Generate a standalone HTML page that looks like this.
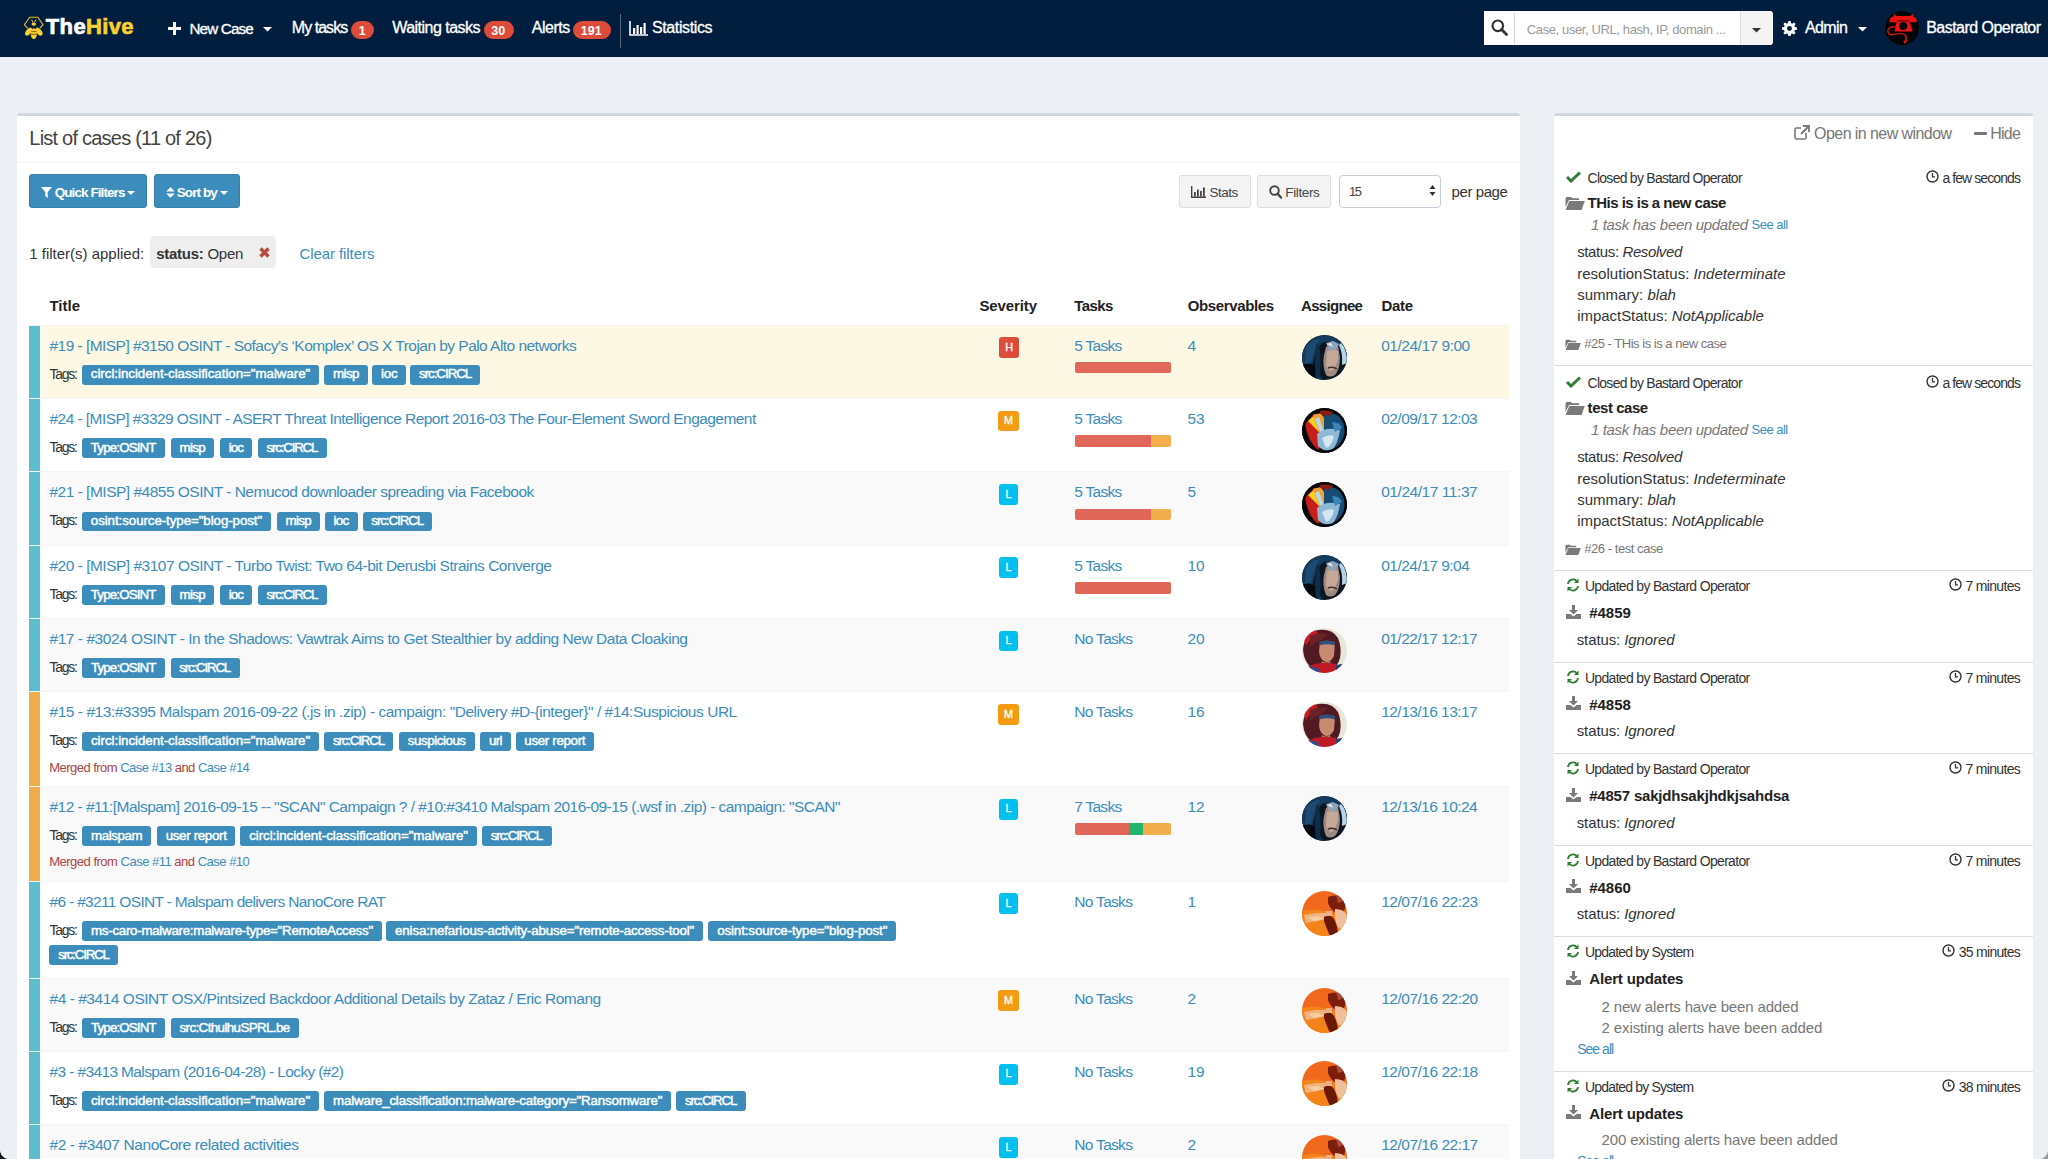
<!DOCTYPE html>
<html><head><meta charset="utf-8"><style>
html,body{margin:0;padding:0;}
body{width:2048px;height:1159px;overflow:hidden;position:relative;background:#ecf0f5;font-family:"Liberation Sans", sans-serif;}
.t{position:absolute;white-space:nowrap;line-height:1;}
svg{position:absolute;}
</style></head><body>
<div style="position:absolute;left:0px;top:0px;width:2048px;height:57px;background:#011e3e"></div>
<svg style="left:22px;top:15px" width="24" height="26" viewBox="0 0 24 26">
<path d="M5.6 13.3 L2.4 9.6 L7.7 2.2 H15.8 L21 9.6 L17.8 13.3" fill="none" stroke="#e9be2c" stroke-width="1.1"/>
<path d="M9.6 4.6 L11 7.4 M14 4.6 L12.6 7.4" stroke="#fbd02e" stroke-width="1"/>
<ellipse cx="11.8" cy="9.1" rx="2.3" ry="1.7" fill="#fbd02e"/>
<ellipse cx="6.6" cy="16.6" rx="2.5" ry="4.7" transform="rotate(38 6.6 16.6)" fill="#fbd02e"/>
<ellipse cx="17" cy="16.6" rx="2.5" ry="4.7" transform="rotate(-38 17 16.6)" fill="#fbd02e"/>
<ellipse cx="11.8" cy="18.6" rx="3.1" ry="5.4" fill="#fbd02e"/>
<path d="M9.2 16.6 H14.4 M8.9 19.3 H14.7" stroke="#7a6320" stroke-width="1"/>
</svg>
<div style="position:absolute;left:168px;top:26.5px;width:13px;height:3.2px;background:#fff"></div>
<div style="position:absolute;left:172.9px;top:21.6px;width:3.2px;height:13px;background:#fff"></div>
<svg style="left:263px;top:27px" width="9" height="5"><path d="M0 0 H9 L4.5 4.5Z" fill="#fff"/></svg>
<div style="position:absolute;left:351.3px;top:20.5px;width:22.599999999999966px;height:18.5px;background:#dd4b39;border-radius:9px"></div>
<div style="position:absolute;left:483.7px;top:20.5px;width:30.099999999999966px;height:18.5px;background:#dd4b39;border-radius:9px"></div>
<div style="position:absolute;left:573.3px;top:20.5px;width:37.60000000000002px;height:18.5px;background:#dd4b39;border-radius:9px"></div>
<div style="position:absolute;left:620px;top:14px;width:1px;height:34px;background:#5b6b7d"></div>
<svg style="left:629px;top:21px" width="20" height="15" viewBox="0 0 20 15">
<path d="M1 0 V14 H19" fill="none" stroke="#fff" stroke-width="1.6"/>
<rect x="4" y="7" width="2.2" height="6" fill="#fff"/><rect x="7.5" y="4" width="2.2" height="9" fill="#fff"/>
<rect x="11" y="6" width="2.2" height="7" fill="#fff"/><rect x="14.5" y="2" width="2.2" height="11" fill="#fff"/>
</svg>
<div style="position:absolute;left:1483.5px;top:11.4px;width:289px;height:34px;background:#fff;border-radius:0 3px 3px 0"></div>
<div style="position:absolute;left:1514px;top:13px;width:1px;height:31px;background:#d2d6de"></div>
<div style="position:absolute;left:1740.3px;top:11.4px;width:32px;height:34px;background:#f4f4f4;border-radius:0 3px 3px 0;border-left:1px solid #e0e0e0;box-sizing:border-box"></div>
<svg style="left:1491px;top:19px" width="17" height="17" viewBox="0 0 17 17">
<circle cx="6.8" cy="6.8" r="5.3" fill="none" stroke="#333" stroke-width="2.2"/>
<path d="M10.6 10.6 L15.5 15.5" stroke="#333" stroke-width="2.8" stroke-linecap="round"/></svg>
<svg style="left:1752px;top:28px" width="9" height="5"><path d="M0 0 H9 L4.5 4.5Z" fill="#333"/></svg>
<svg style="left:1782px;top:21px" width="15" height="15" viewBox="0 0 16 16">
<path fill="#fff" d="M6.8 0h2.4l.4 2.2 1.3.6 1.9-1.3 1.7 1.7-1.3 1.9.6 1.3 2.2.4v2.4l-2.2.4-.6 1.3 1.3 1.9-1.7 1.7-1.9-1.3-1.3.6-.4 2.2H6.8l-.4-2.2-1.3-.6-1.9 1.3-1.7-1.7 1.3-1.9-.6-1.3L0 9.2V6.8l2.2-.4.6-1.3-1.3-1.9 1.7-1.7 1.9 1.3 1.3-.6z"/>
<circle cx="8" cy="8" r="2.6" fill="#011e3e"/></svg>
<svg style="left:1858px;top:27px" width="9" height="5"><path d="M0 0 H9 L4.5 4.5Z" fill="#fff"/></svg>
<svg style="left:1885px;top:11px" width="34" height="34" viewBox="0 0 34 34">
<circle cx="17.1" cy="17.2" r="16.9" fill="#050505"/>
<path d="M4.5 9.5 Q5 6 9 5.3 L8.6 2 L11 4.9 H25.6 L28.2 2.4 L27.8 5.4 Q31.5 6 31.8 10 L31.8 11.3 L25 11.3 L24.2 9.4 H12.4 L11.6 11.3 H4.5Z" fill="#ee1111"/>
<path d="M11.7 10.2 H24.6 L27.7 20.4 H9.4Z" fill="#ee1111"/>
<circle cx="18.2" cy="15.1" r="4" fill="#050505"/>
<path d="M9.8 15.5 Q3 16 2.8 20 Q3 24 8 23.6 Q18 21.5 20.5 24 Q22 27 20.5 31" fill="none" stroke="#c81a12" stroke-width="1.5"/>
<path d="M18.3 29.8 L22.6 29.6 L19.4 33Z" fill="#ee1111"/>
</svg>
<div style="position:absolute;left:17px;top:113px;width:1503px;height:1100px;background:#fff;border-top:3px solid #d2d6de;border-radius:3px;box-shadow:0 1px 1px rgba(0,0,0,.1);box-sizing:border-box"></div>
<div style="position:absolute;left:17px;top:162px;width:1503px;height:1px;background:#f4f4f4"></div>
<div style="position:absolute;left:29px;top:174px;width:118.4px;height:34px;background:#3c8dbc;border:1px solid #367fa9;border-radius:3px;box-sizing:border-box"></div>
<svg style="left:41px;top:187px" width="11" height="11" viewBox="0 0 11 11"><path d="M0 0 H11 L6.8 5 V11 L4.2 9 V5Z" fill="#fff"/></svg>
<svg style="left:127px;top:191px" width="8" height="4"><path d="M0 0 H8 L4 4Z" fill="#fff"/></svg>
<div style="position:absolute;left:154.4px;top:174px;width:85.3px;height:34px;background:#3c8dbc;border:1px solid #367fa9;border-radius:3px;box-sizing:border-box"></div>
<svg style="left:165.5px;top:186.5px" width="9" height="11" viewBox="0 0 9 11"><path d="M0.3 4.6 L4.5 0 L8.7 4.6Z M0.3 6.4 L4.5 11 L8.7 6.4Z" fill="#fff"/></svg>
<svg style="left:219.5px;top:191px" width="8" height="4"><path d="M0 0 H8 L4 4Z" fill="#fff"/></svg>
<div style="position:absolute;left:1178.6px;top:174.6px;width:72px;height:33px;background:#f4f4f4;border:1px solid #ddd;border-radius:3px;box-sizing:border-box"></div>
<svg style="left:1191px;top:186px" width="15" height="12" viewBox="0 0 15 12">
<path d="M0.7 0 V11.3 H15" fill="none" stroke="#444" stroke-width="1.4"/>
<rect x="3" y="6" width="1.8" height="4.6" fill="#444"/><rect x="6" y="3.5" width="1.8" height="7.1" fill="#444"/>
<rect x="9" y="5" width="1.8" height="5.6" fill="#444"/><rect x="12" y="1.5" width="1.8" height="9.1" fill="#444"/></svg>
<div style="position:absolute;left:1256.8px;top:174.6px;width:74.6px;height:33px;background:#f4f4f4;border:1px solid #ddd;border-radius:3px;box-sizing:border-box"></div>
<svg style="left:1269px;top:185px" width="13" height="14" viewBox="0 0 13 14">
<circle cx="5.5" cy="5.5" r="4.3" fill="none" stroke="#444" stroke-width="1.9"/>
<path d="M8.6 8.8 L12 12.5" stroke="#444" stroke-width="2.4" stroke-linecap="round"/></svg>
<div style="position:absolute;left:1339.2px;top:174.6px;width:102.2px;height:33px;background:#fff;border:1px solid #c8cdd8;border-radius:4px;box-sizing:border-box"></div>
<svg style="left:1429px;top:184px" width="7" height="13" viewBox="0 0 7 13"><path d="M0.5 5 L3.5 1 L6.5 5Z M0.5 8 L3.5 12 L6.5 8Z" fill="#333"/></svg>
<div style="position:absolute;left:150.3px;top:236.2px;width:125.7px;height:32.3px;background:#eeeeee;border-radius:4px"></div>
<svg style="left:259px;top:247px" width="11" height="11" viewBox="0 0 11 11"><path d="M1.5 1.5 L9.5 9.5 M9.5 1.5 L1.5 9.5" stroke="#b94a3c" stroke-width="3.4"/></svg>
<div style="position:absolute;left:29px;top:324.5px;width:1480px;height:1px;background:#f4f4f4"></div>
<div style="position:absolute;left:41px;top:325.5px;width:1468px;height:72.4px;background:#fcf8e3"></div>
<div style="position:absolute;left:29px;top:325.5px;width:11px;height:72.4px;background:#5cbecd"></div>
<div style="position:absolute;left:82px;top:364.9px;width:237.10000000000002px;height:19.8px;background:#3c8dbc;border-radius:3px"></div>
<div style="position:absolute;left:324.2px;top:364.9px;width:43.80000000000001px;height:19.8px;background:#3c8dbc;border-radius:3px"></div>
<div style="position:absolute;left:372.3px;top:364.9px;width:34.0px;height:19.8px;background:#3c8dbc;border-radius:3px"></div>
<div style="position:absolute;left:410.2px;top:364.9px;width:70.30000000000001px;height:19.8px;background:#3c8dbc;border-radius:3px"></div>
<div style="position:absolute;left:998.7px;top:337.3px;width:20.3px;height:20.8px;background:#dd4b39;border-radius:3px"></div>
<div style="position:absolute;left:1074.7px;top:361.9px;width:96px;height:11.5px;background:#e0675a;border-radius:2px"></div>
<svg style="left:1302px;top:334.8px" width="45" height="45" viewBox="0 0 45 45"><defs><clipPath id="c1302_3348"><circle cx="22.5" cy="22.5" r="22.5"/></clipPath></defs><g clip-path="url(#c1302_3348)"><rect width="45" height="45" fill="#0b1622"/>
<path d="M0 18 Q6 2 22 0 Q36 0 45 12 L45 30 Q40 20 36 10 Q28 4 20 8 Q12 16 10 34 L0 40Z" fill="#143a5c"/>
<path d="M4 12 Q10 4 18 4 Q12 14 9 28 L3 30Z" fill="#1d4a70"/>
<path d="M39 8 Q45 14 45 28 L40 30 Q41 18 37 10Z" fill="#b9d3e6"/>
<path d="M24 12 Q30 8 36 11 L38 22 Q38 34 33 40 Q28 43 24 40 Q20 30 22 20Z" fill="#a08a80"/>
<path d="M25 16 Q31 14 36 16 L36 24 Q34 32 30 36 Q26 36 24 30Z" fill="#c6a898"/>
<path d="M24 8 L31 6 L37 9 L33 16 L27 15Z" fill="#8fa3b5"/>
<path d="M25 9 L29 8 L31 12Z" fill="#e6eef5"/>
<path d="M26 33 Q31 31 35 34" stroke="#3a2a2a" stroke-width="1.4" fill="none"/>
<path d="M0 30 Q8 26 14 32 Q18 40 14 45 L0 45Z" fill="#05090f"/>
<path d="M16 8 Q20 20 18 40 L22 45 L14 45 Q12 30 14 10Z" fill="#0f2e4a"/></g></svg>
<div style="position:absolute;left:29px;top:397.9px;width:1480px;height:1px;background:#f4f4f4"></div>
<div style="position:absolute;left:41px;top:398.9px;width:1468px;height:72.3px;background:#ffffff"></div>
<div style="position:absolute;left:29px;top:398.9px;width:11px;height:72.3px;background:#5cbecd"></div>
<div style="position:absolute;left:82px;top:438.29999999999995px;width:82.80000000000001px;height:19.8px;background:#3c8dbc;border-radius:3px"></div>
<div style="position:absolute;left:170.7px;top:438.29999999999995px;width:43.30000000000001px;height:19.8px;background:#3c8dbc;border-radius:3px"></div>
<div style="position:absolute;left:219.9px;top:438.29999999999995px;width:32.400000000000006px;height:19.8px;background:#3c8dbc;border-radius:3px"></div>
<div style="position:absolute;left:257.8px;top:438.29999999999995px;width:68.80000000000001px;height:19.8px;background:#3c8dbc;border-radius:3px"></div>
<div style="position:absolute;left:997.5px;top:410.7px;width:21.2px;height:20.8px;background:#f39c12;border-radius:3px"></div>
<div style="position:absolute;left:1074.7px;top:435.29999999999995px;width:76px;height:11.5px;background:#e0675a;border-radius:2px 0 0 2px"></div>
<div style="position:absolute;left:1150.7px;top:435.29999999999995px;width:20px;height:11.5px;background:#f2ae4a;border-radius:0 2px 2px 0"></div>
<svg style="left:1302px;top:408.2px" width="45" height="45" viewBox="0 0 45 45"><defs><clipPath id="c1302_4082"><circle cx="22.5" cy="22.5" r="22.5"/></clipPath></defs><g clip-path="url(#c1302_4082)"><rect width="45" height="45" fill="#0a0a0c"/>
<path d="M3 16 L12 6 L22 8 L24 34 L16 42 Q6 34 3 16Z" fill="#c81e1a"/>
<path d="M6 13 L14 6 L21 10 L22 26 L17 24Z" fill="#f5cf22"/>
<path d="M11 7 L19 5 L24 14 L24 30 L18 26 Q14 16 11 7Z" fill="#f0a032"/>
<path d="M13 11 L17 9 L23 27 L20 29Z" fill="#b6d8ec"/>
<path d="M22 4 Q36 4 42 14 Q45 26 40 38 Q32 45 24 44 L22 30Z" fill="#174b72"/>
<path d="M15 26 Q24 18 38 22 Q36 36 30 42 Q22 44 16 38Z" fill="#8fb8d4"/>
<path d="M20 30 Q26 26 32 28 Q30 38 24 40Z" fill="#d4e6f2"/>
<path d="M30 14 Q38 14 40 20 L33 24Z" fill="#3a86b8"/>
<path d="M18 1 Q26 0 32 4 L26 8 L18 6Z" fill="#8c1b14"/>
<circle cx="22.5" cy="22.5" r="21.5" fill="none" stroke="#08080a" stroke-width="3"/></g></svg>
<div style="position:absolute;left:29px;top:471.2px;width:1480px;height:1px;background:#f4f4f4"></div>
<div style="position:absolute;left:41px;top:472.2px;width:1468px;height:72.4px;background:#f9f9f9"></div>
<div style="position:absolute;left:29px;top:472.2px;width:11px;height:72.4px;background:#5cbecd"></div>
<div style="position:absolute;left:82px;top:511.59999999999997px;width:189px;height:19.8px;background:#3c8dbc;border-radius:3px"></div>
<div style="position:absolute;left:276.6px;top:511.59999999999997px;width:43.69999999999999px;height:19.8px;background:#3c8dbc;border-radius:3px"></div>
<div style="position:absolute;left:324.6px;top:511.59999999999997px;width:33.19999999999999px;height:19.8px;background:#3c8dbc;border-radius:3px"></div>
<div style="position:absolute;left:362.5px;top:511.59999999999997px;width:69.89999999999998px;height:19.8px;background:#3c8dbc;border-radius:3px"></div>
<div style="position:absolute;left:998.6px;top:484.0px;width:19.2px;height:20.8px;background:#00c0ef;border-radius:3px"></div>
<div style="position:absolute;left:1074.7px;top:508.59999999999997px;width:76px;height:11.5px;background:#e0675a;border-radius:2px 0 0 2px"></div>
<div style="position:absolute;left:1150.7px;top:508.59999999999997px;width:20px;height:11.5px;background:#f2ae4a;border-radius:0 2px 2px 0"></div>
<svg style="left:1302px;top:481.5px" width="45" height="45" viewBox="0 0 45 45"><defs><clipPath id="c1302_4815"><circle cx="22.5" cy="22.5" r="22.5"/></clipPath></defs><g clip-path="url(#c1302_4815)"><rect width="45" height="45" fill="#0a0a0c"/>
<path d="M3 16 L12 6 L22 8 L24 34 L16 42 Q6 34 3 16Z" fill="#c81e1a"/>
<path d="M6 13 L14 6 L21 10 L22 26 L17 24Z" fill="#f5cf22"/>
<path d="M11 7 L19 5 L24 14 L24 30 L18 26 Q14 16 11 7Z" fill="#f0a032"/>
<path d="M13 11 L17 9 L23 27 L20 29Z" fill="#b6d8ec"/>
<path d="M22 4 Q36 4 42 14 Q45 26 40 38 Q32 45 24 44 L22 30Z" fill="#174b72"/>
<path d="M15 26 Q24 18 38 22 Q36 36 30 42 Q22 44 16 38Z" fill="#8fb8d4"/>
<path d="M20 30 Q26 26 32 28 Q30 38 24 40Z" fill="#d4e6f2"/>
<path d="M30 14 Q38 14 40 20 L33 24Z" fill="#3a86b8"/>
<path d="M18 1 Q26 0 32 4 L26 8 L18 6Z" fill="#8c1b14"/>
<circle cx="22.5" cy="22.5" r="21.5" fill="none" stroke="#08080a" stroke-width="3"/></g></svg>
<div style="position:absolute;left:29px;top:544.6px;width:1480px;height:1px;background:#f4f4f4"></div>
<div style="position:absolute;left:41px;top:545.6px;width:1468px;height:72.3px;background:#ffffff"></div>
<div style="position:absolute;left:29px;top:545.6px;width:11px;height:72.3px;background:#5cbecd"></div>
<div style="position:absolute;left:82px;top:585.0px;width:82.80000000000001px;height:19.8px;background:#3c8dbc;border-radius:3px"></div>
<div style="position:absolute;left:170.7px;top:585.0px;width:43.30000000000001px;height:19.8px;background:#3c8dbc;border-radius:3px"></div>
<div style="position:absolute;left:219.9px;top:585.0px;width:32.400000000000006px;height:19.8px;background:#3c8dbc;border-radius:3px"></div>
<div style="position:absolute;left:257.8px;top:585.0px;width:68.80000000000001px;height:19.8px;background:#3c8dbc;border-radius:3px"></div>
<div style="position:absolute;left:998.6px;top:557.4px;width:19.2px;height:20.8px;background:#00c0ef;border-radius:3px"></div>
<div style="position:absolute;left:1074.7px;top:582.0px;width:96px;height:11.5px;background:#e0675a;border-radius:2px"></div>
<svg style="left:1302px;top:554.9px" width="45" height="45" viewBox="0 0 45 45"><defs><clipPath id="c1302_5549"><circle cx="22.5" cy="22.5" r="22.5"/></clipPath></defs><g clip-path="url(#c1302_5549)"><rect width="45" height="45" fill="#0b1622"/>
<path d="M0 18 Q6 2 22 0 Q36 0 45 12 L45 30 Q40 20 36 10 Q28 4 20 8 Q12 16 10 34 L0 40Z" fill="#143a5c"/>
<path d="M4 12 Q10 4 18 4 Q12 14 9 28 L3 30Z" fill="#1d4a70"/>
<path d="M39 8 Q45 14 45 28 L40 30 Q41 18 37 10Z" fill="#b9d3e6"/>
<path d="M24 12 Q30 8 36 11 L38 22 Q38 34 33 40 Q28 43 24 40 Q20 30 22 20Z" fill="#a08a80"/>
<path d="M25 16 Q31 14 36 16 L36 24 Q34 32 30 36 Q26 36 24 30Z" fill="#c6a898"/>
<path d="M24 8 L31 6 L37 9 L33 16 L27 15Z" fill="#8fa3b5"/>
<path d="M25 9 L29 8 L31 12Z" fill="#e6eef5"/>
<path d="M26 33 Q31 31 35 34" stroke="#3a2a2a" stroke-width="1.4" fill="none"/>
<path d="M0 30 Q8 26 14 32 Q18 40 14 45 L0 45Z" fill="#05090f"/>
<path d="M16 8 Q20 20 18 40 L22 45 L14 45 Q12 30 14 10Z" fill="#0f2e4a"/></g></svg>
<div style="position:absolute;left:29px;top:617.9px;width:1480px;height:1px;background:#f4f4f4"></div>
<div style="position:absolute;left:41px;top:618.9px;width:1468px;height:72.4px;background:#f9f9f9"></div>
<div style="position:absolute;left:29px;top:618.9px;width:11px;height:72.4px;background:#5cbecd"></div>
<div style="position:absolute;left:82.2px;top:658.3px;width:82.60000000000001px;height:19.8px;background:#3c8dbc;border-radius:3px"></div>
<div style="position:absolute;left:170.5px;top:658.3px;width:69.0px;height:19.8px;background:#3c8dbc;border-radius:3px"></div>
<div style="position:absolute;left:998.6px;top:630.6999999999999px;width:19.2px;height:20.8px;background:#00c0ef;border-radius:3px"></div>
<svg style="left:1302px;top:628.1999999999999px" width="45" height="45" viewBox="0 0 45 45"><defs><clipPath id="c1302_6281"><circle cx="22.5" cy="22.5" r="22.5"/></clipPath></defs><g clip-path="url(#c1302_6281)"><rect width="45" height="45" fill="#e8e6d8"/>
<path d="M1 22 Q2 6 16 2 Q30 0 36 10 Q40 20 38 30 Q36 38 30 40 L10 40 Q2 34 1 22Z" fill="#4f1a22"/>
<path d="M2 12 Q6 4 14 2 L16 6 Q8 10 4 18Z" fill="#c41c22"/>
<path d="M8 8 Q16 4 26 6 L20 12 Q12 14 8 20Z" fill="#6a2228"/>
<path d="M18 14 Q26 11 33 15 L32 28 Q29 34 24 34 Q18 32 17 24Z" fill="#c98a72"/>
<path d="M17 14 Q25 11 33 14 L33 17.5 Q25 15 17 17.5Z" fill="#2f507c"/>
<path d="M20 33 Q24 36 28 33 L29 37 L19 37Z" fill="#c07a62"/>
<path d="M18 35 L30 35 L30 38 L18 38Z" fill="#37568a"/>
<path d="M7 38 Q18 33 34 36 L36 45 L8 45Z" fill="#c21a22"/>
<path d="M5 38 L16 40 L18 45 L6 45Z" fill="#2f4f8c"/>
<path d="M34 37 L45 35 L45 45 L34 45Z" fill="#2a3f74"/></g></svg>
<div style="position:absolute;left:29px;top:691.3px;width:1480px;height:1px;background:#f4f4f4"></div>
<div style="position:absolute;left:41px;top:692.3px;width:1468px;height:93.65px;background:#ffffff"></div>
<div style="position:absolute;left:29px;top:692.3px;width:11px;height:93.65px;background:#f0ad4e"></div>
<div style="position:absolute;left:82.2px;top:731.6999999999999px;width:236.8px;height:19.8px;background:#3c8dbc;border-radius:3px"></div>
<div style="position:absolute;left:324.3px;top:731.6999999999999px;width:69.0px;height:19.8px;background:#3c8dbc;border-radius:3px"></div>
<div style="position:absolute;left:399px;top:731.6999999999999px;width:75.60000000000002px;height:19.8px;background:#3c8dbc;border-radius:3px"></div>
<div style="position:absolute;left:480.3px;top:731.6999999999999px;width:30.69999999999999px;height:19.8px;background:#3c8dbc;border-radius:3px"></div>
<div style="position:absolute;left:515.5px;top:731.6999999999999px;width:78.60000000000002px;height:19.8px;background:#3c8dbc;border-radius:3px"></div>
<div style="position:absolute;left:997.5px;top:704.0999999999999px;width:21.2px;height:20.8px;background:#f39c12;border-radius:3px"></div>
<svg style="left:1302px;top:701.5999999999999px" width="45" height="45" viewBox="0 0 45 45"><defs><clipPath id="c1302_7015"><circle cx="22.5" cy="22.5" r="22.5"/></clipPath></defs><g clip-path="url(#c1302_7015)"><rect width="45" height="45" fill="#e8e6d8"/>
<path d="M1 22 Q2 6 16 2 Q30 0 36 10 Q40 20 38 30 Q36 38 30 40 L10 40 Q2 34 1 22Z" fill="#4f1a22"/>
<path d="M2 12 Q6 4 14 2 L16 6 Q8 10 4 18Z" fill="#c41c22"/>
<path d="M8 8 Q16 4 26 6 L20 12 Q12 14 8 20Z" fill="#6a2228"/>
<path d="M18 14 Q26 11 33 15 L32 28 Q29 34 24 34 Q18 32 17 24Z" fill="#c98a72"/>
<path d="M17 14 Q25 11 33 14 L33 17.5 Q25 15 17 17.5Z" fill="#2f507c"/>
<path d="M20 33 Q24 36 28 33 L29 37 L19 37Z" fill="#c07a62"/>
<path d="M18 35 L30 35 L30 38 L18 38Z" fill="#37568a"/>
<path d="M7 38 Q18 33 34 36 L36 45 L8 45Z" fill="#c21a22"/>
<path d="M5 38 L16 40 L18 45 L6 45Z" fill="#2f4f8c"/>
<path d="M34 37 L45 35 L45 45 L34 45Z" fill="#2a3f74"/></g></svg>
<div style="position:absolute;left:29px;top:785.95px;width:1480px;height:1px;background:#f4f4f4"></div>
<div style="position:absolute;left:41px;top:786.95px;width:1468px;height:93.65px;background:#f9f9f9"></div>
<div style="position:absolute;left:29px;top:786.95px;width:11px;height:93.65px;background:#f0ad4e"></div>
<div style="position:absolute;left:82.2px;top:826.35px;width:68.99999999999999px;height:19.8px;background:#3c8dbc;border-radius:3px"></div>
<div style="position:absolute;left:156.9px;top:826.35px;width:78.6px;height:19.8px;background:#3c8dbc;border-radius:3px"></div>
<div style="position:absolute;left:240.4px;top:826.35px;width:236.4px;height:19.8px;background:#3c8dbc;border-radius:3px"></div>
<div style="position:absolute;left:482px;top:826.35px;width:69.5px;height:19.8px;background:#3c8dbc;border-radius:3px"></div>
<div style="position:absolute;left:998.6px;top:798.75px;width:19.2px;height:20.8px;background:#00c0ef;border-radius:3px"></div>
<div style="position:absolute;left:1074.7px;top:823.35px;width:54px;height:11.5px;background:#e0675a;border-radius:2px 0 0 2px"></div>
<div style="position:absolute;left:1128.7px;top:823.35px;width:14px;height:11.5px;background:#25b46e;"></div>
<div style="position:absolute;left:1142.7px;top:823.35px;width:28px;height:11.5px;background:#f2ae4a;border-radius:0 2px 2px 0"></div>
<svg style="left:1302px;top:796.25px" width="45" height="45" viewBox="0 0 45 45"><defs><clipPath id="c1302_7962"><circle cx="22.5" cy="22.5" r="22.5"/></clipPath></defs><g clip-path="url(#c1302_7962)"><rect width="45" height="45" fill="#0b1622"/>
<path d="M0 18 Q6 2 22 0 Q36 0 45 12 L45 30 Q40 20 36 10 Q28 4 20 8 Q12 16 10 34 L0 40Z" fill="#143a5c"/>
<path d="M4 12 Q10 4 18 4 Q12 14 9 28 L3 30Z" fill="#1d4a70"/>
<path d="M39 8 Q45 14 45 28 L40 30 Q41 18 37 10Z" fill="#b9d3e6"/>
<path d="M24 12 Q30 8 36 11 L38 22 Q38 34 33 40 Q28 43 24 40 Q20 30 22 20Z" fill="#a08a80"/>
<path d="M25 16 Q31 14 36 16 L36 24 Q34 32 30 36 Q26 36 24 30Z" fill="#c6a898"/>
<path d="M24 8 L31 6 L37 9 L33 16 L27 15Z" fill="#8fa3b5"/>
<path d="M25 9 L29 8 L31 12Z" fill="#e6eef5"/>
<path d="M26 33 Q31 31 35 34" stroke="#3a2a2a" stroke-width="1.4" fill="none"/>
<path d="M0 30 Q8 26 14 32 Q18 40 14 45 L0 45Z" fill="#05090f"/>
<path d="M16 8 Q20 20 18 40 L22 45 L14 45 Q12 30 14 10Z" fill="#0f2e4a"/></g></svg>
<div style="position:absolute;left:29px;top:880.6px;width:1480px;height:1px;background:#f4f4f4"></div>
<div style="position:absolute;left:41px;top:881.6px;width:1468px;height:96.0px;background:#ffffff"></div>
<div style="position:absolute;left:29px;top:881.6px;width:11px;height:96.0px;background:#5cbecd"></div>
<div style="position:absolute;left:82.2px;top:921.0px;width:299.6px;height:19.8px;background:#3c8dbc;border-radius:3px"></div>
<div style="position:absolute;left:386.3px;top:921.0px;width:316.7px;height:19.8px;background:#3c8dbc;border-radius:3px"></div>
<div style="position:absolute;left:708.4px;top:921.0px;width:187.80000000000007px;height:19.8px;background:#3c8dbc;border-radius:3px"></div>
<div style="position:absolute;left:49.4px;top:945.1px;width:68.69999999999999px;height:19.8px;background:#3c8dbc;border-radius:3px"></div>
<div style="position:absolute;left:998.6px;top:893.4px;width:19.2px;height:20.8px;background:#00c0ef;border-radius:3px"></div>
<svg style="left:1302px;top:890.9px" width="45" height="45" viewBox="0 0 45 45"><defs><clipPath id="c1302_8909"><circle cx="22.5" cy="22.5" r="22.5"/></clipPath></defs><g clip-path="url(#c1302_8909)"><rect width="45" height="45" fill="#f0691c"/>
<path d="M0 20 Q14 16 30 22 L45 30 L45 45 L0 45Z" fill="#f2841a"/>
<path d="M2 24 L14 22 L24 22 L26 27 L16 30 L4 32Z" fill="#f1b282"/>
<path d="M6 26 L16 25 L22 28 L12 30Z" fill="#f6d0a0"/>
<path d="M26 6 Q34 2 42 8 Q45 16 41 22 L34 22 Q28 18 26 12Z" fill="#7c1e0c"/>
<path d="M34 4 Q40 6 42 10 L36 12Z" fill="#b04a3a"/>
<path d="M22 26 Q28 22 32 28 Q36 36 36 44 L28 45 Q24 36 22 30Z" fill="#6a1808"/>
<path d="M33 18 Q42 18 45 24 L45 36 Q40 40 36 36 Q32 28 33 18Z" fill="#f0c09a"/>
<path d="M24 20 L30 20 L30 25 L24 25Z" fill="#e9b08a"/></g></svg>
<div style="position:absolute;left:29px;top:977.6px;width:1480px;height:1px;background:#f4f4f4"></div>
<div style="position:absolute;left:41px;top:978.6px;width:1468px;height:72.4px;background:#f9f9f9"></div>
<div style="position:absolute;left:29px;top:978.6px;width:11px;height:72.4px;background:#5cbecd"></div>
<div style="position:absolute;left:82.2px;top:1018.0px;width:82.7px;height:19.8px;background:#3c8dbc;border-radius:3px"></div>
<div style="position:absolute;left:170.7px;top:1018.0px;width:128.0px;height:19.8px;background:#3c8dbc;border-radius:3px"></div>
<div style="position:absolute;left:997.5px;top:990.4px;width:21.2px;height:20.8px;background:#f39c12;border-radius:3px"></div>
<svg style="left:1302px;top:987.9px" width="45" height="45" viewBox="0 0 45 45"><defs><clipPath id="c1302_9879"><circle cx="22.5" cy="22.5" r="22.5"/></clipPath></defs><g clip-path="url(#c1302_9879)"><rect width="45" height="45" fill="#f0691c"/>
<path d="M0 20 Q14 16 30 22 L45 30 L45 45 L0 45Z" fill="#f2841a"/>
<path d="M2 24 L14 22 L24 22 L26 27 L16 30 L4 32Z" fill="#f1b282"/>
<path d="M6 26 L16 25 L22 28 L12 30Z" fill="#f6d0a0"/>
<path d="M26 6 Q34 2 42 8 Q45 16 41 22 L34 22 Q28 18 26 12Z" fill="#7c1e0c"/>
<path d="M34 4 Q40 6 42 10 L36 12Z" fill="#b04a3a"/>
<path d="M22 26 Q28 22 32 28 Q36 36 36 44 L28 45 Q24 36 22 30Z" fill="#6a1808"/>
<path d="M33 18 Q42 18 45 24 L45 36 Q40 40 36 36 Q32 28 33 18Z" fill="#f0c09a"/>
<path d="M24 20 L30 20 L30 25 L24 25Z" fill="#e9b08a"/></g></svg>
<div style="position:absolute;left:29px;top:1051.0px;width:1480px;height:1px;background:#f4f4f4"></div>
<div style="position:absolute;left:41px;top:1052.0px;width:1468px;height:72.4px;background:#ffffff"></div>
<div style="position:absolute;left:29px;top:1052.0px;width:11px;height:72.4px;background:#5cbecd"></div>
<div style="position:absolute;left:82.2px;top:1091.4px;width:236.8px;height:19.8px;background:#3c8dbc;border-radius:3px"></div>
<div style="position:absolute;left:324.3px;top:1091.4px;width:346.90000000000003px;height:19.8px;background:#3c8dbc;border-radius:3px"></div>
<div style="position:absolute;left:676.1px;top:1091.4px;width:69.60000000000002px;height:19.8px;background:#3c8dbc;border-radius:3px"></div>
<div style="position:absolute;left:998.6px;top:1063.8px;width:19.2px;height:20.8px;background:#00c0ef;border-radius:3px"></div>
<svg style="left:1302px;top:1061.3px" width="45" height="45" viewBox="0 0 45 45"><defs><clipPath id="c1302_10613"><circle cx="22.5" cy="22.5" r="22.5"/></clipPath></defs><g clip-path="url(#c1302_10613)"><rect width="45" height="45" fill="#f0691c"/>
<path d="M0 20 Q14 16 30 22 L45 30 L45 45 L0 45Z" fill="#f2841a"/>
<path d="M2 24 L14 22 L24 22 L26 27 L16 30 L4 32Z" fill="#f1b282"/>
<path d="M6 26 L16 25 L22 28 L12 30Z" fill="#f6d0a0"/>
<path d="M26 6 Q34 2 42 8 Q45 16 41 22 L34 22 Q28 18 26 12Z" fill="#7c1e0c"/>
<path d="M34 4 Q40 6 42 10 L36 12Z" fill="#b04a3a"/>
<path d="M22 26 Q28 22 32 28 Q36 36 36 44 L28 45 Q24 36 22 30Z" fill="#6a1808"/>
<path d="M33 18 Q42 18 45 24 L45 36 Q40 40 36 36 Q32 28 33 18Z" fill="#f0c09a"/>
<path d="M24 20 L30 20 L30 25 L24 25Z" fill="#e9b08a"/></g></svg>
<div style="position:absolute;left:29px;top:1124.4px;width:1480px;height:1px;background:#f4f4f4"></div>
<div style="position:absolute;left:41px;top:1125.4px;width:1468px;height:72.4px;background:#f9f9f9"></div>
<div style="position:absolute;left:29px;top:1125.4px;width:11px;height:72.4px;background:#5cbecd"></div>
<div style="position:absolute;left:998.6px;top:1137.2px;width:19.2px;height:20.8px;background:#00c0ef;border-radius:3px"></div>
<svg style="left:1302px;top:1134.7px" width="45" height="45" viewBox="0 0 45 45"><defs><clipPath id="c1302_11347"><circle cx="22.5" cy="22.5" r="22.5"/></clipPath></defs><g clip-path="url(#c1302_11347)"><rect width="45" height="45" fill="#f0691c"/>
<path d="M0 20 Q14 16 30 22 L45 30 L45 45 L0 45Z" fill="#f2841a"/>
<path d="M2 24 L14 22 L24 22 L26 27 L16 30 L4 32Z" fill="#f1b282"/>
<path d="M6 26 L16 25 L22 28 L12 30Z" fill="#f6d0a0"/>
<path d="M26 6 Q34 2 42 8 Q45 16 41 22 L34 22 Q28 18 26 12Z" fill="#7c1e0c"/>
<path d="M34 4 Q40 6 42 10 L36 12Z" fill="#b04a3a"/>
<path d="M22 26 Q28 22 32 28 Q36 36 36 44 L28 45 Q24 36 22 30Z" fill="#6a1808"/>
<path d="M33 18 Q42 18 45 24 L45 36 Q40 40 36 36 Q32 28 33 18Z" fill="#f0c09a"/>
<path d="M24 20 L30 20 L30 25 L24 25Z" fill="#e9b08a"/></g></svg>
<div style="position:absolute;left:1554px;top:113px;width:479px;height:1100px;background:#fff;border-top:3px solid #d2d6de;border-radius:3px;box-sizing:border-box;box-shadow:0 1px 1px rgba(0,0,0,.1)"></div>
<svg style="left:1794px;top:125px" width="16" height="15" viewBox="0 0 16 15">
<path d="M7 3 H2.5 Q1 3 1 4.5 V12.5 Q1 14 2.5 14 H10.5 Q12 14 12 12.5 V8" fill="none" stroke="#777" stroke-width="1.6"/>
<path d="M9 1 H15 V7 M15 1 L7 9" fill="none" stroke="#777" stroke-width="1.8"/></svg>
<div style="position:absolute;left:1974px;top:131.5px;width:13px;height:3px;background:#777;border-radius:1px"></div>
<svg style="left:1565.5px;top:171px" width="15" height="12" viewBox="0 0 15 12"><path d="M1 6 L5 10 L14 1.5" fill="none" stroke="#2e7d32" stroke-width="3"/></svg>
<svg style="left:1926px;top:170px" width="13" height="13" viewBox="0 0 13 13"><circle cx="6.5" cy="6.5" r="5.5" fill="none" stroke="#333" stroke-width="1.4"/><path d="M6.5 3 V6.8 H9" fill="none" stroke="#333" stroke-width="1.3"/></svg>
<svg style="left:1565px;top:195.5px" width="20.0" height="14.0" viewBox="0 0 20 14"><path d="M0.5 3 Q0.5 1 2 1 H6 L7.5 2.3 H14 V4 H4 L0.5 11Z" fill="#7a7a7a"/><path d="M4.3 5 H19.8 L16.5 14 H0.5Z" fill="#7a7a7a"/></svg>
<svg style="left:1565px;top:338.5px" width="16.0" height="11.200000000000001" viewBox="0 0 20 14"><path d="M0.5 3 Q0.5 1 2 1 H6 L7.5 2.3 H14 V4 H4 L0.5 11Z" fill="#7a7a7a"/><path d="M4.3 5 H19.8 L16.5 14 H0.5Z" fill="#7a7a7a"/></svg>
<div style="position:absolute;left:1554px;top:365px;width:479px;height:1.3px;background:#dcdcdc"></div>
<svg style="left:1565.5px;top:376px" width="15" height="12" viewBox="0 0 15 12"><path d="M1 6 L5 10 L14 1.5" fill="none" stroke="#2e7d32" stroke-width="3"/></svg>
<svg style="left:1926px;top:375px" width="13" height="13" viewBox="0 0 13 13"><circle cx="6.5" cy="6.5" r="5.5" fill="none" stroke="#333" stroke-width="1.4"/><path d="M6.5 3 V6.8 H9" fill="none" stroke="#333" stroke-width="1.3"/></svg>
<svg style="left:1565px;top:400.5px" width="20.0" height="14.0" viewBox="0 0 20 14"><path d="M0.5 3 Q0.5 1 2 1 H6 L7.5 2.3 H14 V4 H4 L0.5 11Z" fill="#7a7a7a"/><path d="M4.3 5 H19.8 L16.5 14 H0.5Z" fill="#7a7a7a"/></svg>
<svg style="left:1565px;top:543.5px" width="16.0" height="11.200000000000001" viewBox="0 0 20 14"><path d="M0.5 3 Q0.5 1 2 1 H6 L7.5 2.3 H14 V4 H4 L0.5 11Z" fill="#7a7a7a"/><path d="M4.3 5 H19.8 L16.5 14 H0.5Z" fill="#7a7a7a"/></svg>
<div style="position:absolute;left:1554px;top:570px;width:479px;height:1.3px;background:#dcdcdc"></div>
<svg style="left:1565.5px;top:578px" width="14" height="14" viewBox="0 0 14 14"><path d="M2 6 A5 5 0 0 1 11 3.5" fill="none" stroke="#2e7d32" stroke-width="1.8"/><path d="M12.5 0.5 V5 H8Z" fill="#2e7d32"/><path d="M12 8 A5 5 0 0 1 3 10.5" fill="none" stroke="#2e7d32" stroke-width="1.8"/><path d="M1.5 13.5 V9 H6Z" fill="#2e7d32"/></svg>
<svg style="left:1949.3px;top:578px" width="13" height="13" viewBox="0 0 13 13"><circle cx="6.5" cy="6.5" r="5.5" fill="none" stroke="#333" stroke-width="1.4"/><path d="M6.5 3 V6.8 H9" fill="none" stroke="#333" stroke-width="1.3"/></svg>
<svg style="left:1565.5px;top:604.5px" width="15" height="14" viewBox="0 0 15 14"><path d="M6 0 H9 V5 H12 L7.5 9.5 L3 5 H6Z" fill="#7a7a7a"/><path d="M0 9 H4.5 L7.5 11.5 L10.5 9 H15 V14 H0Z" fill="#7a7a7a"/></svg>
<div style="position:absolute;left:1554px;top:661.5px;width:479px;height:1.3px;background:#dcdcdc"></div>
<svg style="left:1565.5px;top:669.5px" width="14" height="14" viewBox="0 0 14 14"><path d="M2 6 A5 5 0 0 1 11 3.5" fill="none" stroke="#2e7d32" stroke-width="1.8"/><path d="M12.5 0.5 V5 H8Z" fill="#2e7d32"/><path d="M12 8 A5 5 0 0 1 3 10.5" fill="none" stroke="#2e7d32" stroke-width="1.8"/><path d="M1.5 13.5 V9 H6Z" fill="#2e7d32"/></svg>
<svg style="left:1949.3px;top:669.5px" width="13" height="13" viewBox="0 0 13 13"><circle cx="6.5" cy="6.5" r="5.5" fill="none" stroke="#333" stroke-width="1.4"/><path d="M6.5 3 V6.8 H9" fill="none" stroke="#333" stroke-width="1.3"/></svg>
<svg style="left:1565.5px;top:696.0px" width="15" height="14" viewBox="0 0 15 14"><path d="M6 0 H9 V5 H12 L7.5 9.5 L3 5 H6Z" fill="#7a7a7a"/><path d="M0 9 H4.5 L7.5 11.5 L10.5 9 H15 V14 H0Z" fill="#7a7a7a"/></svg>
<div style="position:absolute;left:1554px;top:753.0px;width:479px;height:1.3px;background:#dcdcdc"></div>
<svg style="left:1565.5px;top:761px" width="14" height="14" viewBox="0 0 14 14"><path d="M2 6 A5 5 0 0 1 11 3.5" fill="none" stroke="#2e7d32" stroke-width="1.8"/><path d="M12.5 0.5 V5 H8Z" fill="#2e7d32"/><path d="M12 8 A5 5 0 0 1 3 10.5" fill="none" stroke="#2e7d32" stroke-width="1.8"/><path d="M1.5 13.5 V9 H6Z" fill="#2e7d32"/></svg>
<svg style="left:1949.3px;top:761px" width="13" height="13" viewBox="0 0 13 13"><circle cx="6.5" cy="6.5" r="5.5" fill="none" stroke="#333" stroke-width="1.4"/><path d="M6.5 3 V6.8 H9" fill="none" stroke="#333" stroke-width="1.3"/></svg>
<svg style="left:1565.5px;top:787.5px" width="15" height="14" viewBox="0 0 15 14"><path d="M6 0 H9 V5 H12 L7.5 9.5 L3 5 H6Z" fill="#7a7a7a"/><path d="M0 9 H4.5 L7.5 11.5 L10.5 9 H15 V14 H0Z" fill="#7a7a7a"/></svg>
<div style="position:absolute;left:1554px;top:844.5px;width:479px;height:1.3px;background:#dcdcdc"></div>
<svg style="left:1565.5px;top:852.5px" width="14" height="14" viewBox="0 0 14 14"><path d="M2 6 A5 5 0 0 1 11 3.5" fill="none" stroke="#2e7d32" stroke-width="1.8"/><path d="M12.5 0.5 V5 H8Z" fill="#2e7d32"/><path d="M12 8 A5 5 0 0 1 3 10.5" fill="none" stroke="#2e7d32" stroke-width="1.8"/><path d="M1.5 13.5 V9 H6Z" fill="#2e7d32"/></svg>
<svg style="left:1949.3px;top:852.5px" width="13" height="13" viewBox="0 0 13 13"><circle cx="6.5" cy="6.5" r="5.5" fill="none" stroke="#333" stroke-width="1.4"/><path d="M6.5 3 V6.8 H9" fill="none" stroke="#333" stroke-width="1.3"/></svg>
<svg style="left:1565.5px;top:879.0px" width="15" height="14" viewBox="0 0 15 14"><path d="M6 0 H9 V5 H12 L7.5 9.5 L3 5 H6Z" fill="#7a7a7a"/><path d="M0 9 H4.5 L7.5 11.5 L10.5 9 H15 V14 H0Z" fill="#7a7a7a"/></svg>
<div style="position:absolute;left:1554px;top:936.0px;width:479px;height:1.3px;background:#dcdcdc"></div>
<svg style="left:1565.5px;top:944px" width="14" height="14" viewBox="0 0 14 14"><path d="M2 6 A5 5 0 0 1 11 3.5" fill="none" stroke="#2e7d32" stroke-width="1.8"/><path d="M12.5 0.5 V5 H8Z" fill="#2e7d32"/><path d="M12 8 A5 5 0 0 1 3 10.5" fill="none" stroke="#2e7d32" stroke-width="1.8"/><path d="M1.5 13.5 V9 H6Z" fill="#2e7d32"/></svg>
<svg style="left:1942.4px;top:944px" width="13" height="13" viewBox="0 0 13 13"><circle cx="6.5" cy="6.5" r="5.5" fill="none" stroke="#333" stroke-width="1.4"/><path d="M6.5 3 V6.8 H9" fill="none" stroke="#333" stroke-width="1.3"/></svg>
<svg style="left:1565.5px;top:970.5px" width="15" height="14" viewBox="0 0 15 14"><path d="M6 0 H9 V5 H12 L7.5 9.5 L3 5 H6Z" fill="#7a7a7a"/><path d="M0 9 H4.5 L7.5 11.5 L10.5 9 H15 V14 H0Z" fill="#7a7a7a"/></svg>
<div style="position:absolute;left:1554px;top:1070.5px;width:479px;height:1.3px;background:#dcdcdc"></div>
<svg style="left:1565.5px;top:1078.5px" width="14" height="14" viewBox="0 0 14 14"><path d="M2 6 A5 5 0 0 1 11 3.5" fill="none" stroke="#2e7d32" stroke-width="1.8"/><path d="M12.5 0.5 V5 H8Z" fill="#2e7d32"/><path d="M12 8 A5 5 0 0 1 3 10.5" fill="none" stroke="#2e7d32" stroke-width="1.8"/><path d="M1.5 13.5 V9 H6Z" fill="#2e7d32"/></svg>
<svg style="left:1942.4px;top:1078.5px" width="13" height="13" viewBox="0 0 13 13"><circle cx="6.5" cy="6.5" r="5.5" fill="none" stroke="#333" stroke-width="1.4"/><path d="M6.5 3 V6.8 H9" fill="none" stroke="#333" stroke-width="1.3"/></svg>
<svg style="left:1565.5px;top:1105.0px" width="15" height="14" viewBox="0 0 15 14"><path d="M6 0 H9 V5 H12 L7.5 9.5 L3 5 H6Z" fill="#7a7a7a"/><path d="M0 9 H4.5 L7.5 11.5 L10.5 9 H15 V14 H0Z" fill="#7a7a7a"/></svg>
<svg style="left:0px;top:1151px" width="8" height="8" viewBox="0 0 8 8"><path d="M0 0 Q1 6 7 8 L0 8Z" fill="#111"/></svg>
<svg style="left:2040px;top:1151px" width="8" height="8" viewBox="0 0 8 8"><path d="M8 0 Q7 6 1 8 L8 8Z" fill="#9a9a96"/></svg>
<span class="t" id="t0" style="left:45.8px;top:15.80px;font-size:22px;color:#ffffff;font-weight:bold;letter-spacing:0.352px;-webkit-text-stroke:0.7px currentColor;">The<span style="color:#fbd02e">Hive</span></span>
<span class="t" id="t1" style="left:189.4px;top:21.08px;font-size:15.2px;color:#ffffff;letter-spacing:-0.808px;-webkit-text-stroke:0.3px #fff;">New Case</span>
<span class="t" id="t2" style="left:291.8px;top:20.30px;font-size:16px;color:#ffffff;letter-spacing:-0.963px;-webkit-text-stroke:0.3px #fff;">My tasks</span>
<span class="t" id="t3" style="left:358.85px;top:24.67px;font-size:12.5px;color:#ffffff;font-weight:bold;">1</span>
<span class="t" id="t4" style="left:392.2px;top:20.30px;font-size:16px;color:#ffffff;letter-spacing:-0.516px;-webkit-text-stroke:0.3px #fff;">Waiting tasks</span>
<span class="t" id="t5" style="left:491.25px;top:24.67px;font-size:12.5px;color:#ffffff;font-weight:bold;">30</span>
<span class="t" id="t6" style="left:531.8px;top:20.30px;font-size:16px;color:#ffffff;letter-spacing:-0.492px;-webkit-text-stroke:0.3px #fff;">Alerts</span>
<span class="t" id="t7" style="left:580.8499999999999px;top:24.67px;font-size:12.5px;color:#ffffff;font-weight:bold;">191</span>
<span class="t" id="t8" style="left:652px;top:20.30px;font-size:16px;color:#ffffff;letter-spacing:-0.391px;-webkit-text-stroke:0.3px #fff;">Statistics</span>
<span class="t" id="t9" style="left:1526.8px;top:22.95px;font-size:13px;color:#999;letter-spacing:-0.387px;">Case, user, URL, hash, IP, domain ...</span>
<span class="t" id="t10" style="left:1805px;top:19.80px;font-size:16px;color:#ffffff;letter-spacing:-0.635px;-webkit-text-stroke:0.3px #fff;">Admin</span>
<span class="t" id="t11" style="left:1926.2px;top:20.20px;font-size:16px;color:#ffffff;letter-spacing:-0.525px;-webkit-text-stroke:0.3px #fff;">Bastard Operator</span>
<span class="t" id="t12" style="left:29.3px;top:128.40px;font-size:20px;color:#444;letter-spacing:-0.776px;">List of cases (11 of 26)</span>
<span class="t" id="t13" style="left:54.7px;top:185.62px;font-size:13.5px;color:#ffffff;font-weight:bold;letter-spacing:-0.919px;">Quick Filters</span>
<span class="t" id="t14" style="left:176.7px;top:185.62px;font-size:13.5px;color:#ffffff;font-weight:bold;letter-spacing:-0.895px;">Sort by</span>
<span class="t" id="t15" style="left:1209.6px;top:185.53px;font-size:13.5px;color:#444;letter-spacing:-0.503px;">Stats</span>
<span class="t" id="t16" style="left:1285.3px;top:185.53px;font-size:13.5px;color:#444;letter-spacing:-0.362px;">Filters</span>
<span class="t" id="t17" style="left:1348.9px;top:185.05px;font-size:13px;color:#444;letter-spacing:-1.446px;">15</span>
<span class="t" id="t18" style="left:1451.5px;top:183.85px;font-size:15px;color:#333;letter-spacing:-0.402px;">per page</span>
<span class="t" id="t19" style="left:29.3px;top:245.85px;font-size:15px;color:#333;letter-spacing:-0.008px;">1 filter(s) applied:</span>
<span class="t" id="t20" style="left:156.2px;top:245.85px;font-size:15px;color:#333;letter-spacing:-0.266px;"><b>status:</b> Open</span>
<span class="t" id="t21" style="left:299.4px;top:245.85px;font-size:15px;color:#3c8dbc;letter-spacing:-0.069px;">Clear filters</span>
<span class="t" id="t22" style="left:49.5px;top:297.85px;font-size:15px;color:#222;font-weight:bold;letter-spacing:-0.017px;">Title</span>
<span class="t" id="t23" style="left:979.4px;top:297.85px;font-size:15px;color:#222;font-weight:bold;letter-spacing:-0.103px;">Severity</span>
<span class="t" id="t24" style="left:1074.3px;top:297.85px;font-size:15px;color:#222;font-weight:bold;letter-spacing:-0.605px;">Tasks</span>
<span class="t" id="t25" style="left:1187.7px;top:297.85px;font-size:15px;color:#222;font-weight:bold;letter-spacing:-0.358px;">Observables</span>
<span class="t" id="t26" style="left:1301px;top:297.85px;font-size:15px;color:#222;font-weight:bold;letter-spacing:-0.680px;">Assignee</span>
<span class="t" id="t27" style="left:1381.4px;top:297.85px;font-size:15px;color:#222;font-weight:bold;letter-spacing:-0.262px;">Date</span>
<span class="t" id="t28" style="left:49.5px;top:337.52px;font-size:15.5px;color:#3c8dbc;letter-spacing:-0.538px;">#19 - [MISP] #3150 OSINT - Sofacy’s ‘Komplex’ OS X Trojan by Palo Alto networks</span>
<span class="t" id="t29" style="left:49.5px;top:366.50px;font-size:14px;color:#333;letter-spacing:-1.237px;">Tags:</span>
<span class="t" id="t30" style="left:90.8px;top:367.49px;font-size:13.3px;color:#fff;letter-spacing:-0.024px;-webkit-text-stroke:0.45px #fff;">circl:incident-classification="malware"</span>
<span class="t" id="t31" style="left:333.0px;top:367.49px;font-size:13.3px;color:#fff;letter-spacing:-0.537px;-webkit-text-stroke:0.45px #fff;">misp</span>
<span class="t" id="t32" style="left:381.1px;top:367.49px;font-size:13.3px;color:#fff;letter-spacing:-0.240px;-webkit-text-stroke:0.45px #fff;">ioc</span>
<span class="t" id="t33" style="left:419.0px;top:367.49px;font-size:13.3px;color:#fff;letter-spacing:-1.015px;-webkit-text-stroke:0.45px #fff;">src:CIRCL</span>
<span class="t" id="t34" style="left:999.1px;top:341.92px;font-size:10.8px;color:#fff;width:20.3px;text-align:center;-webkit-text-stroke:0.35px #fff;">H</span>
<span class="t" id="t35" style="left:1074.3px;top:337.52px;font-size:15.5px;color:#3c8dbc;letter-spacing:-0.705px;">5 Tasks</span>
<span class="t" id="t36" style="left:1187.5px;top:337.52px;font-size:15.5px;color:#3c8dbc;">4</span>
<span class="t" id="t37" style="left:1381.2px;top:337.52px;font-size:15.5px;color:#3c8dbc;letter-spacing:-0.481px;">01/24/17 9:00</span>
<span class="t" id="t38" style="left:49.5px;top:410.92px;font-size:15.5px;color:#3c8dbc;letter-spacing:-0.552px;">#24 - [MISP] #3329 OSINT - ASERT Threat Intelligence Report 2016-03 The Four-Element Sword Engagement</span>
<span class="t" id="t39" style="left:49.5px;top:439.90px;font-size:14px;color:#333;letter-spacing:-1.237px;">Tags:</span>
<span class="t" id="t40" style="left:90.8px;top:440.89px;font-size:13.3px;color:#fff;letter-spacing:-0.837px;-webkit-text-stroke:0.45px #fff;">Type:OSINT</span>
<span class="t" id="t41" style="left:179.5px;top:440.89px;font-size:13.3px;color:#fff;letter-spacing:-0.679px;-webkit-text-stroke:0.45px #fff;">misp</span>
<span class="t" id="t42" style="left:228.70000000000002px;top:440.89px;font-size:13.3px;color:#fff;letter-spacing:-0.880px;-webkit-text-stroke:0.45px #fff;">ioc</span>
<span class="t" id="t43" style="left:266.6px;top:440.89px;font-size:13.3px;color:#fff;letter-spacing:-1.192px;-webkit-text-stroke:0.45px #fff;">src:CIRCL</span>
<span class="t" id="t44" style="left:997.9px;top:415.32px;font-size:10.8px;color:#fff;width:21.2px;text-align:center;-webkit-text-stroke:0.35px #fff;">M</span>
<span class="t" id="t45" style="left:1074.3px;top:410.92px;font-size:15.5px;color:#3c8dbc;letter-spacing:-0.705px;">5 Tasks</span>
<span class="t" id="t46" style="left:1187.5px;top:410.92px;font-size:15.5px;color:#3c8dbc;">53</span>
<span class="t" id="t47" style="left:1381.2px;top:410.92px;font-size:15.5px;color:#3c8dbc;letter-spacing:-0.529px;">02/09/17 12:03</span>
<span class="t" id="t48" style="left:49.5px;top:484.22px;font-size:15.5px;color:#3c8dbc;letter-spacing:-0.502px;">#21 - [MISP] #4855 OSINT - Nemucod downloader spreading via Facebook</span>
<span class="t" id="t49" style="left:49.5px;top:513.20px;font-size:14px;color:#333;letter-spacing:-1.237px;">Tags:</span>
<span class="t" id="t50" style="left:90.8px;top:514.20px;font-size:13.3px;color:#fff;letter-spacing:-0.062px;-webkit-text-stroke:0.45px #fff;">osint:source-type="blog-post"</span>
<span class="t" id="t51" style="left:285.40000000000003px;top:514.20px;font-size:13.3px;color:#fff;letter-spacing:-0.565px;-webkit-text-stroke:0.45px #fff;">misp</span>
<span class="t" id="t52" style="left:333.40000000000003px;top:514.20px;font-size:13.3px;color:#fff;letter-spacing:-0.560px;-webkit-text-stroke:0.45px #fff;">ioc</span>
<span class="t" id="t53" style="left:371.3px;top:514.20px;font-size:13.3px;color:#fff;letter-spacing:-1.062px;-webkit-text-stroke:0.45px #fff;">src:CIRCL</span>
<span class="t" id="t54" style="left:999.0px;top:488.62px;font-size:10.8px;color:#fff;width:19.2px;text-align:center;-webkit-text-stroke:0.35px #fff;">L</span>
<span class="t" id="t55" style="left:1074.3px;top:484.22px;font-size:15.5px;color:#3c8dbc;letter-spacing:-0.705px;">5 Tasks</span>
<span class="t" id="t56" style="left:1187.5px;top:484.22px;font-size:15.5px;color:#3c8dbc;">5</span>
<span class="t" id="t57" style="left:1381.2px;top:484.22px;font-size:15.5px;color:#3c8dbc;letter-spacing:-0.443px;">01/24/17 11:37</span>
<span class="t" id="t58" style="left:49.5px;top:557.63px;font-size:15.5px;color:#3c8dbc;letter-spacing:-0.499px;">#20 - [MISP] #3107 OSINT - Turbo Twist: Two 64-bit Derusbi Strains Converge</span>
<span class="t" id="t59" style="left:49.5px;top:586.60px;font-size:14px;color:#333;letter-spacing:-1.237px;">Tags:</span>
<span class="t" id="t60" style="left:90.8px;top:587.60px;font-size:13.3px;color:#fff;letter-spacing:-0.837px;-webkit-text-stroke:0.45px #fff;">Type:OSINT</span>
<span class="t" id="t61" style="left:179.5px;top:587.60px;font-size:13.3px;color:#fff;letter-spacing:-0.679px;-webkit-text-stroke:0.45px #fff;">misp</span>
<span class="t" id="t62" style="left:228.70000000000002px;top:587.60px;font-size:13.3px;color:#fff;letter-spacing:-0.880px;-webkit-text-stroke:0.45px #fff;">ioc</span>
<span class="t" id="t63" style="left:266.6px;top:587.60px;font-size:13.3px;color:#fff;letter-spacing:-1.192px;-webkit-text-stroke:0.45px #fff;">src:CIRCL</span>
<span class="t" id="t64" style="left:999.0px;top:562.02px;font-size:10.8px;color:#fff;width:19.2px;text-align:center;-webkit-text-stroke:0.35px #fff;">L</span>
<span class="t" id="t65" style="left:1074.3px;top:557.63px;font-size:15.5px;color:#3c8dbc;letter-spacing:-0.705px;">5 Tasks</span>
<span class="t" id="t66" style="left:1187.5px;top:557.63px;font-size:15.5px;color:#3c8dbc;">10</span>
<span class="t" id="t67" style="left:1381.2px;top:557.63px;font-size:15.5px;color:#3c8dbc;letter-spacing:-0.513px;">01/24/17 9:04</span>
<span class="t" id="t68" style="left:49.5px;top:630.93px;font-size:15.5px;color:#3c8dbc;letter-spacing:-0.457px;">#17 - #3024 OSINT - In the Shadows: Vawtrak Aims to Get Stealthier by adding New Data Cloaking</span>
<span class="t" id="t69" style="left:49.5px;top:659.90px;font-size:14px;color:#333;letter-spacing:-1.237px;">Tags:</span>
<span class="t" id="t70" style="left:91.0px;top:660.89px;font-size:13.3px;color:#fff;letter-spacing:-0.859px;-webkit-text-stroke:0.45px #fff;">Type:OSINT</span>
<span class="t" id="t71" style="left:179.3px;top:660.89px;font-size:13.3px;color:#fff;letter-spacing:-1.168px;-webkit-text-stroke:0.45px #fff;">src:CIRCL</span>
<span class="t" id="t72" style="left:999.0px;top:635.32px;font-size:10.8px;color:#fff;width:19.2px;text-align:center;-webkit-text-stroke:0.35px #fff;">L</span>
<span class="t" id="t73" style="left:1074.3px;top:630.93px;font-size:15.5px;color:#3c8dbc;letter-spacing:-0.689px;">No Tasks</span>
<span class="t" id="t74" style="left:1187.5px;top:630.93px;font-size:15.5px;color:#3c8dbc;">20</span>
<span class="t" id="t75" style="left:1381.2px;top:630.93px;font-size:15.5px;color:#3c8dbc;letter-spacing:-0.529px;">01/22/17 12:17</span>
<span class="t" id="t76" style="left:49.5px;top:704.33px;font-size:15.5px;color:#3c8dbc;letter-spacing:-0.460px;">#15 - #13:#3395 Malspam 2016-09-22 (.js in .zip) - campaign: "Delivery #D-{integer}" / #14:Suspicious URL</span>
<span class="t" id="t77" style="left:49.5px;top:733.30px;font-size:14px;color:#333;letter-spacing:-1.237px;">Tags:</span>
<span class="t" id="t78" style="left:91.0px;top:734.29px;font-size:13.3px;color:#fff;letter-spacing:-0.032px;-webkit-text-stroke:0.45px #fff;">circl:incident-classification="malware"</span>
<span class="t" id="t79" style="left:333.1px;top:734.29px;font-size:13.3px;color:#fff;letter-spacing:-1.168px;-webkit-text-stroke:0.45px #fff;">src:CIRCL</span>
<span class="t" id="t80" style="left:407.8px;top:734.29px;font-size:13.3px;color:#fff;letter-spacing:-0.431px;-webkit-text-stroke:0.45px #fff;">suspicious</span>
<span class="t" id="t81" style="left:489.1px;top:734.29px;font-size:13.3px;color:#fff;letter-spacing:-0.673px;-webkit-text-stroke:0.45px #fff;">url</span>
<span class="t" id="t82" style="left:524.3px;top:734.29px;font-size:13.3px;color:#fff;letter-spacing:-0.314px;-webkit-text-stroke:0.45px #fff;">user report</span>
<span class="t" id="t83" style="left:49.2px;top:760.65px;font-size:13px;color:#a94442;letter-spacing:-0.528px;">Merged from <span style="color:#3c8dbc">Case #13</span> and <span style="color:#3c8dbc">Case #14</span></span>
<span class="t" id="t84" style="left:997.9px;top:708.72px;font-size:10.8px;color:#fff;width:21.2px;text-align:center;-webkit-text-stroke:0.35px #fff;">M</span>
<span class="t" id="t85" style="left:1074.3px;top:704.33px;font-size:15.5px;color:#3c8dbc;letter-spacing:-0.689px;">No Tasks</span>
<span class="t" id="t86" style="left:1187.5px;top:704.33px;font-size:15.5px;color:#3c8dbc;">16</span>
<span class="t" id="t87" style="left:1381.2px;top:704.33px;font-size:15.5px;color:#3c8dbc;letter-spacing:-0.529px;">12/13/16 13:17</span>
<span class="t" id="t88" style="left:49.5px;top:798.98px;font-size:15.5px;color:#3c8dbc;letter-spacing:-0.533px;">#12 - #11:[Malspam] 2016-09-15 -- "SCAN" Campaign ? / #10:#3410 Malspam 2016-09-15 (.wsf in .zip) - campaign: "SCAN"</span>
<span class="t" id="t89" style="left:49.5px;top:827.95px;font-size:14px;color:#333;letter-spacing:-1.237px;">Tags:</span>
<span class="t" id="t90" style="left:91.0px;top:828.95px;font-size:13.3px;color:#fff;letter-spacing:-0.393px;-webkit-text-stroke:0.45px #fff;">malspam</span>
<span class="t" id="t91" style="left:165.70000000000002px;top:828.95px;font-size:13.3px;color:#fff;letter-spacing:-0.314px;-webkit-text-stroke:0.45px #fff;">user report</span>
<span class="t" id="t92" style="left:249.20000000000002px;top:828.95px;font-size:13.3px;color:#fff;letter-spacing:-0.042px;-webkit-text-stroke:0.45px #fff;">circl:incident-classification="malware"</span>
<span class="t" id="t93" style="left:490.8px;top:828.95px;font-size:13.3px;color:#fff;letter-spacing:-1.109px;-webkit-text-stroke:0.45px #fff;">src:CIRCL</span>
<span class="t" id="t94" style="left:49.2px;top:855.30px;font-size:13px;color:#a94442;letter-spacing:-0.498px;">Merged from <span style="color:#3c8dbc">Case #11</span> and <span style="color:#3c8dbc">Case #10</span></span>
<span class="t" id="t95" style="left:999.0px;top:803.37px;font-size:10.8px;color:#fff;width:19.2px;text-align:center;-webkit-text-stroke:0.35px #fff;">L</span>
<span class="t" id="t96" style="left:1074.3px;top:798.98px;font-size:15.5px;color:#3c8dbc;letter-spacing:-0.736px;">7 Tasks</span>
<span class="t" id="t97" style="left:1187.5px;top:798.98px;font-size:15.5px;color:#3c8dbc;">12</span>
<span class="t" id="t98" style="left:1381.2px;top:798.98px;font-size:15.5px;color:#3c8dbc;letter-spacing:-0.529px;">12/13/16 10:24</span>
<span class="t" id="t99" style="left:49.5px;top:893.63px;font-size:15.5px;color:#3c8dbc;letter-spacing:-0.673px;">#6 - #3211 OSINT - Malspam delivers NanoCore RAT</span>
<span class="t" id="t100" style="left:49.5px;top:922.60px;font-size:14px;color:#333;letter-spacing:-1.237px;">Tags:</span>
<span class="t" id="t101" style="left:91.0px;top:923.60px;font-size:13.3px;color:#fff;letter-spacing:-0.255px;-webkit-text-stroke:0.45px #fff;">ms-caro-malware:malware-type="RemoteAccess"</span>
<span class="t" id="t102" style="left:395.1px;top:923.60px;font-size:13.3px;color:#fff;letter-spacing:-0.140px;-webkit-text-stroke:0.45px #fff;">enisa:nefarious-activity-abuse="remote-access-tool"</span>
<span class="t" id="t103" style="left:717.1999999999999px;top:923.60px;font-size:13.3px;color:#fff;letter-spacing:-0.104px;-webkit-text-stroke:0.45px #fff;">osint:source-type="blog-post"</span>
<span class="t" id="t104" style="left:58.2px;top:947.70px;font-size:13.3px;color:#fff;letter-spacing:-1.203px;-webkit-text-stroke:0.45px #fff;">src:CIRCL</span>
<span class="t" id="t105" style="left:999.0px;top:898.02px;font-size:10.8px;color:#fff;width:19.2px;text-align:center;-webkit-text-stroke:0.35px #fff;">L</span>
<span class="t" id="t106" style="left:1074.3px;top:893.63px;font-size:15.5px;color:#3c8dbc;letter-spacing:-0.689px;">No Tasks</span>
<span class="t" id="t107" style="left:1187.5px;top:893.63px;font-size:15.5px;color:#3c8dbc;">1</span>
<span class="t" id="t108" style="left:1381.2px;top:893.63px;font-size:15.5px;color:#3c8dbc;letter-spacing:-0.492px;">12/07/16 22:23</span>
<span class="t" id="t109" style="left:49.5px;top:990.63px;font-size:15.5px;color:#3c8dbc;letter-spacing:-0.466px;">#4 - #3414 OSINT OSX/Pintsized Backdoor Additional Details by Zataz / Eric Romang</span>
<span class="t" id="t110" style="left:49.5px;top:1019.60px;font-size:14px;color:#333;letter-spacing:-1.237px;">Tags:</span>
<span class="t" id="t111" style="left:91.0px;top:1020.60px;font-size:13.3px;color:#fff;letter-spacing:-0.848px;-webkit-text-stroke:0.45px #fff;">Type:OSINT</span>
<span class="t" id="t112" style="left:179.5px;top:1020.60px;font-size:13.3px;color:#fff;letter-spacing:-0.576px;-webkit-text-stroke:0.45px #fff;">src:CthulhuSPRL.be</span>
<span class="t" id="t113" style="left:997.9px;top:995.02px;font-size:10.8px;color:#fff;width:21.2px;text-align:center;-webkit-text-stroke:0.35px #fff;">M</span>
<span class="t" id="t114" style="left:1074.3px;top:990.63px;font-size:15.5px;color:#3c8dbc;letter-spacing:-0.689px;">No Tasks</span>
<span class="t" id="t115" style="left:1187.5px;top:990.63px;font-size:15.5px;color:#3c8dbc;">2</span>
<span class="t" id="t116" style="left:1381.2px;top:990.63px;font-size:15.5px;color:#3c8dbc;letter-spacing:-0.492px;">12/07/16 22:20</span>
<span class="t" id="t117" style="left:49.5px;top:1064.03px;font-size:15.5px;color:#3c8dbc;letter-spacing:-0.624px;">#3 - #3413 Malspam (2016-04-28) - Locky (#2)</span>
<span class="t" id="t118" style="left:49.5px;top:1093.00px;font-size:14px;color:#333;letter-spacing:-1.237px;">Tags:</span>
<span class="t" id="t119" style="left:91.0px;top:1094.00px;font-size:13.3px;color:#fff;letter-spacing:-0.032px;-webkit-text-stroke:0.45px #fff;">circl:incident-classification="malware"</span>
<span class="t" id="t120" style="left:333.1px;top:1094.00px;font-size:13.3px;color:#fff;letter-spacing:-0.168px;-webkit-text-stroke:0.45px #fff;">malware_classification:malware-category="Ransomware"</span>
<span class="t" id="t121" style="left:684.9px;top:1094.00px;font-size:13.3px;color:#fff;letter-spacing:-1.097px;-webkit-text-stroke:0.45px #fff;">src:CIRCL</span>
<span class="t" id="t122" style="left:999.0px;top:1068.42px;font-size:10.8px;color:#fff;width:19.2px;text-align:center;-webkit-text-stroke:0.35px #fff;">L</span>
<span class="t" id="t123" style="left:1074.3px;top:1064.03px;font-size:15.5px;color:#3c8dbc;letter-spacing:-0.689px;">No Tasks</span>
<span class="t" id="t124" style="left:1187.5px;top:1064.03px;font-size:15.5px;color:#3c8dbc;">19</span>
<span class="t" id="t125" style="left:1381.2px;top:1064.03px;font-size:15.5px;color:#3c8dbc;letter-spacing:-0.492px;">12/07/16 22:18</span>
<span class="t" id="t126" style="left:49.5px;top:1137.43px;font-size:15.5px;color:#3c8dbc;letter-spacing:-0.408px;">#2 - #3407 NanoCore related activities</span>
<span class="t" id="t127" style="left:999.0px;top:1141.82px;font-size:10.8px;color:#fff;width:19.2px;text-align:center;-webkit-text-stroke:0.35px #fff;">L</span>
<span class="t" id="t128" style="left:1074.3px;top:1137.43px;font-size:15.5px;color:#3c8dbc;letter-spacing:-0.689px;">No Tasks</span>
<span class="t" id="t129" style="left:1187.5px;top:1137.43px;font-size:15.5px;color:#3c8dbc;">2</span>
<span class="t" id="t130" style="left:1381.2px;top:1137.43px;font-size:15.5px;color:#3c8dbc;letter-spacing:-0.492px;">12/07/16 22:17</span>
<span class="t" id="t131" style="left:1814.1px;top:125.60px;font-size:16px;color:#777;letter-spacing:-0.568px;">Open in new window</span>
<span class="t" id="t132" style="left:1990.3px;top:125.60px;font-size:16px;color:#777;letter-spacing:-0.773px;">Hide</span>
<span class="t" id="t133" style="left:1587.6px;top:170.50px;font-size:14px;color:#333;letter-spacing:-0.742px;">Closed by Bastard Operator</span>
<span class="t" id="t134" style="left:1942.4px;top:170.50px;font-size:14px;color:#333;letter-spacing:-0.912px;">a few seconds</span>
<span class="t" id="t135" style="left:1587.6px;top:195.45px;font-size:15px;color:#222;font-weight:bold;letter-spacing:-0.524px;">THis is is a new case</span>
<span class="t" id="t136" style="left:1590.9px;top:216.65px;font-size:15px;color:#777;font-style:italic;letter-spacing:-0.324px;">1 task has been updated</span>
<span class="t" id="t137" style="left:1751.6px;top:218.35px;font-size:13px;color:#3c8dbc;letter-spacing:-0.515px;">See all</span>
<span class="t" id="t138" style="left:1577.2px;top:244.25px;font-size:15px;color:#333;letter-spacing:-0.388px;">status: <i>Resolved</i></span>
<span class="t" id="t139" style="left:1577.2px;top:265.85px;font-size:15px;color:#333;letter-spacing:0.025px;">resolutionStatus: <i>Indeterminate</i></span>
<span class="t" id="t140" style="left:1577.2px;top:287.25px;font-size:15px;color:#333;letter-spacing:0.026px;">summary: <i>blah</i></span>
<span class="t" id="t141" style="left:1577.2px;top:308.25px;font-size:15px;color:#333;letter-spacing:-0.038px;">impactStatus: <i>NotApplicable</i></span>
<span class="t" id="t142" style="left:1584.2px;top:336.95px;font-size:13px;color:#777;letter-spacing:-0.480px;">#25 - THis is is a new case</span>
<span class="t" id="t143" style="left:1587.6px;top:375.50px;font-size:14px;color:#333;letter-spacing:-0.742px;">Closed by Bastard Operator</span>
<span class="t" id="t144" style="left:1942.4px;top:375.50px;font-size:14px;color:#333;letter-spacing:-0.912px;">a few seconds</span>
<span class="t" id="t145" style="left:1587.6px;top:400.45px;font-size:15px;color:#222;font-weight:bold;letter-spacing:-0.449px;">test case</span>
<span class="t" id="t146" style="left:1590.9px;top:421.65px;font-size:15px;color:#777;font-style:italic;letter-spacing:-0.324px;">1 task has been updated</span>
<span class="t" id="t147" style="left:1751.6px;top:423.35px;font-size:13px;color:#3c8dbc;letter-spacing:-0.515px;">See all</span>
<span class="t" id="t148" style="left:1577.2px;top:449.25px;font-size:15px;color:#333;letter-spacing:-0.388px;">status: <i>Resolved</i></span>
<span class="t" id="t149" style="left:1577.2px;top:470.85px;font-size:15px;color:#333;letter-spacing:0.025px;">resolutionStatus: <i>Indeterminate</i></span>
<span class="t" id="t150" style="left:1577.2px;top:492.25px;font-size:15px;color:#333;letter-spacing:0.026px;">summary: <i>blah</i></span>
<span class="t" id="t151" style="left:1577.2px;top:513.25px;font-size:15px;color:#333;letter-spacing:-0.038px;">impactStatus: <i>NotApplicable</i></span>
<span class="t" id="t152" style="left:1584.2px;top:541.95px;font-size:13px;color:#777;letter-spacing:-0.447px;">#26 - test case</span>
<span class="t" id="t153" style="left:1584.9px;top:579.30px;font-size:14px;color:#333;letter-spacing:-0.675px;">Updated by Bastard Operator</span>
<span class="t" id="t154" style="left:1965.4px;top:579.30px;font-size:14px;color:#333;letter-spacing:-0.659px;">7 minutes</span>
<span class="t" id="t155" style="left:1589.2px;top:605.25px;font-size:15px;color:#222;font-weight:bold;letter-spacing:-0.026px;">#4859</span>
<span class="t" id="t156" style="left:1576.7px;top:631.85px;font-size:15px;color:#333;letter-spacing:-0.099px;">status: <i>Ignored</i></span>
<span class="t" id="t157" style="left:1584.9px;top:670.80px;font-size:14px;color:#333;letter-spacing:-0.675px;">Updated by Bastard Operator</span>
<span class="t" id="t158" style="left:1965.4px;top:670.80px;font-size:14px;color:#333;letter-spacing:-0.659px;">7 minutes</span>
<span class="t" id="t159" style="left:1589.2px;top:696.75px;font-size:15px;color:#222;font-weight:bold;letter-spacing:-0.026px;">#4858</span>
<span class="t" id="t160" style="left:1576.7px;top:723.35px;font-size:15px;color:#333;letter-spacing:-0.099px;">status: <i>Ignored</i></span>
<span class="t" id="t161" style="left:1584.9px;top:762.30px;font-size:14px;color:#333;letter-spacing:-0.675px;">Updated by Bastard Operator</span>
<span class="t" id="t162" style="left:1965.4px;top:762.30px;font-size:14px;color:#333;letter-spacing:-0.659px;">7 minutes</span>
<span class="t" id="t163" style="left:1589.2px;top:788.25px;font-size:15px;color:#222;font-weight:bold;letter-spacing:-0.197px;">#4857 sakjdhsakjhdkjsahdsa</span>
<span class="t" id="t164" style="left:1576.7px;top:814.85px;font-size:15px;color:#333;letter-spacing:-0.099px;">status: <i>Ignored</i></span>
<span class="t" id="t165" style="left:1584.9px;top:853.80px;font-size:14px;color:#333;letter-spacing:-0.675px;">Updated by Bastard Operator</span>
<span class="t" id="t166" style="left:1965.4px;top:853.80px;font-size:14px;color:#333;letter-spacing:-0.659px;">7 minutes</span>
<span class="t" id="t167" style="left:1589.2px;top:879.75px;font-size:15px;color:#222;font-weight:bold;letter-spacing:-0.026px;">#4860</span>
<span class="t" id="t168" style="left:1576.7px;top:906.35px;font-size:15px;color:#333;letter-spacing:-0.099px;">status: <i>Ignored</i></span>
<span class="t" id="t169" style="left:1584.9px;top:945.30px;font-size:14px;color:#333;letter-spacing:-0.804px;">Updated by System</span>
<span class="t" id="t170" style="left:1958.8px;top:945.30px;font-size:14px;color:#333;letter-spacing:-0.714px;">35 minutes</span>
<span class="t" id="t171" style="left:1589.2px;top:971.25px;font-size:15px;color:#222;font-weight:bold;letter-spacing:-0.133px;">Alert updates</span>
<span class="t" id="t172" style="left:1601.5px;top:998.55px;font-size:15px;color:#777;letter-spacing:-0.145px;">2 new alerts have been added</span>
<span class="t" id="t173" style="left:1601.5px;top:1020.15px;font-size:15px;color:#777;letter-spacing:-0.109px;">2 existing alerts have been added</span>
<span class="t" id="t174" style="left:1577.2px;top:1042.10px;font-size:14px;color:#3c8dbc;letter-spacing:-0.971px;">See all</span>
<span class="t" id="t175" style="left:1584.9px;top:1079.80px;font-size:14px;color:#333;letter-spacing:-0.804px;">Updated by System</span>
<span class="t" id="t176" style="left:1958.8px;top:1079.80px;font-size:14px;color:#333;letter-spacing:-0.714px;">38 minutes</span>
<span class="t" id="t177" style="left:1589.2px;top:1105.75px;font-size:15px;color:#222;font-weight:bold;letter-spacing:-0.133px;">Alert updates</span>
<span class="t" id="t178" style="left:1601.5px;top:1131.75px;font-size:15px;color:#777;letter-spacing:-0.140px;">200 existing alerts have been added</span>
<span class="t" id="t179" style="left:1577.2px;top:1154.10px;font-size:14px;color:#3c8dbc;letter-spacing:-0.971px;">See all</span>
</body></html>
